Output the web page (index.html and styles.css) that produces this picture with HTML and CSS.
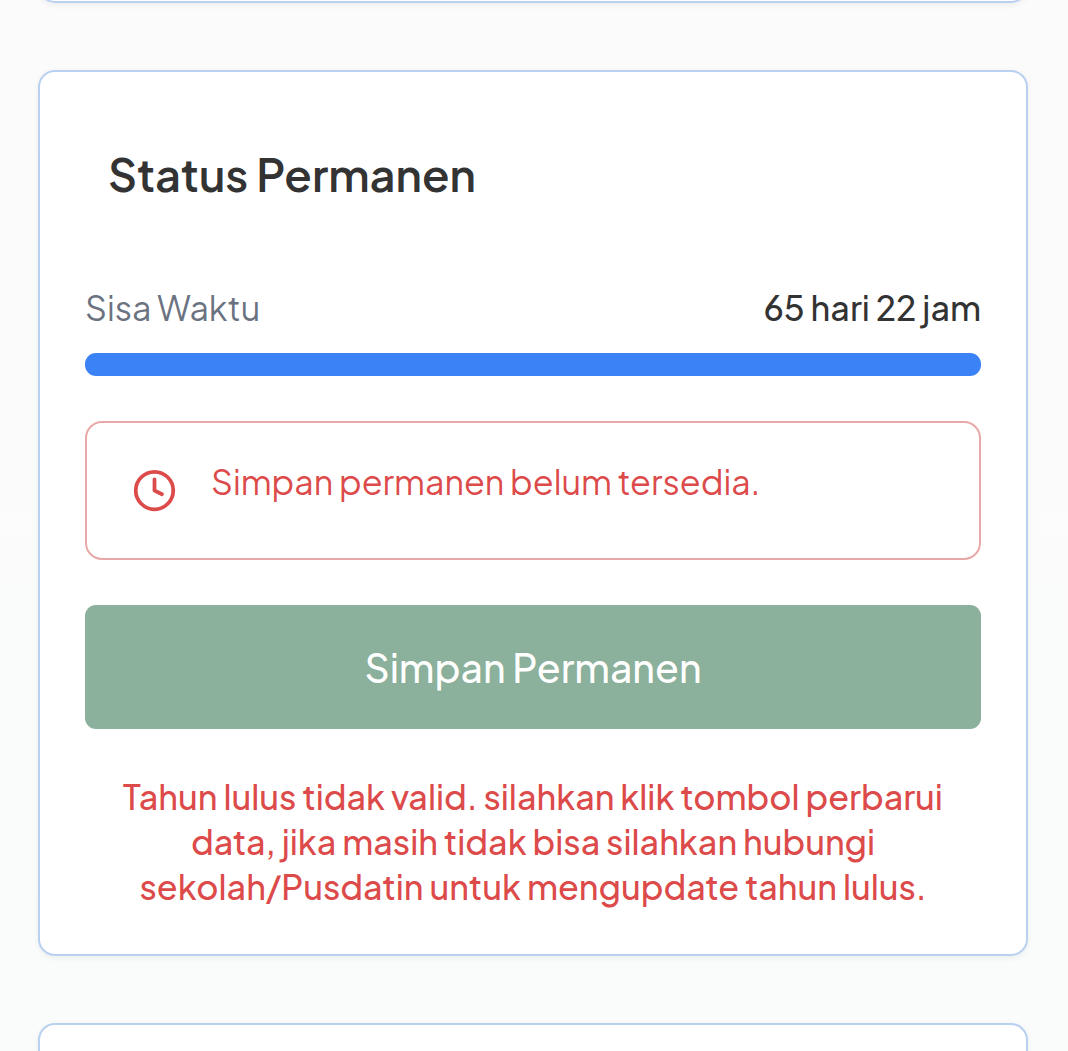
FILE: index.html
```html
<!DOCTYPE html>
<html lang="id">
<head>
  <meta charset="utf-8">
  <meta name="viewport" content="width=device-width, initial-scale=1">
  <title>Status Permanen</title>
  <link rel="stylesheet" href="styles.css">
</head>
<body>
  <main class="page">
    <section class="card card-previous"></section>

    <section class="card">
      <h2 class="card-title">Status Permanen</h2>
      <div class="card-body">
        <div class="countdown">
          <div class="countdown-row">
            <span class="countdown-label">Sisa Waktu</span>
            <span class="countdown-value">65 hari 22 jam</span>
          </div>
          <div class="progress" role="progressbar" aria-label="Sisa Waktu" aria-valuenow="100"></div>
        </div>

        <div class="alert" role="alert">
          <svg class="alert-icon" viewBox="0 0 24 24" fill="none" stroke="currentColor" stroke-width="2" stroke-linecap="round" stroke-linejoin="round" aria-hidden="true">
            <circle cx="12" cy="12" r="10"/>
            <path d="M12 6v6l4 2"/>
          </svg>
          <p class="alert-text">Simpan permanen belum tersedia.</p>
        </div>

        <button class="save-button" type="button">Simpan Permanen</button>

        <p class="error-text">Tahun lulus tidak valid. silahkan klik tombol perbarui data, jika masih tidak bisa silahkan hubungi sekolah/Pusdatin untuk mengupdate tahun lulus.</p>
      </div>
    </section>

    <section class="card card-next"></section>
  </main>
</body>
</html>
```

FILE: styles.css
```css
* {
  box-sizing: border-box;
}

body {
  margin: 0;
  background: linear-gradient(#fbfbfb, #fafcfb);
  color: #333;
  font-family: "Plus Jakarta Sans", Inter, sans-serif;
  font-size: 34px;
  line-height: 45px;
}

h2,
p {
  margin: 0;
}

.page {
  display: flex;
  flex-direction: column;
  gap: 67px;
  min-height: 100vh;
  padding: 0 40px 0 38px;
  overflow: hidden;
}

.card {
  flex-shrink: 0;
  background: #fff;
  border: 2px solid #b9d1f0;
  border-radius: 17px;
  box-shadow: 0 2px 6px rgba(0, 0, 0, 0.06);
}

.card-previous {
  height: 60px;
  margin-top: -57px;
}

.card-next {
  flex: 1 0 28px;
  border-bottom: 0;
  border-radius: 17px 17px 0 0;
}

.card-title {
  padding: 68px;
  font-size: 45px;
  font-weight: 600;
  line-height: 68px;
}

.card-body {
  display: flex;
  flex-direction: column;
  gap: 45px;
  padding: 9px 45px 45px;
}

.countdown {
  display: flex;
  flex-direction: column;
  gap: 23px;
}

.countdown-row {
  display: flex;
  justify-content: space-between;
}

.countdown-label {
  color: #6b7280;
}

.countdown-value {
  font-weight: 500;
}

.progress {
  height: 23px;
  background: #3b82f6;
  border-radius: 11px;
}

.alert {
  display: flex;
  align-items: flex-start;
  gap: 34px;
  padding: 45px;
  border: 2px solid #e9a8a8;
  border-radius: 17px;
  color: #dc4a4a;
}

.alert-icon {
  flex: none;
  width: 45px;
  height: 45px;
}

.alert-text {
  line-height: 28px;
}

.save-button {
  height: 124px;
  border: 0;
  border-radius: 11px;
  background: #8bb09b;
  color: #fff;
  font: inherit;
  font-size: 39px;
  font-weight: 500;
}

.error-text {
  color: #dc4a4a;
  font-weight: 500;
  text-align: center;
}
```
